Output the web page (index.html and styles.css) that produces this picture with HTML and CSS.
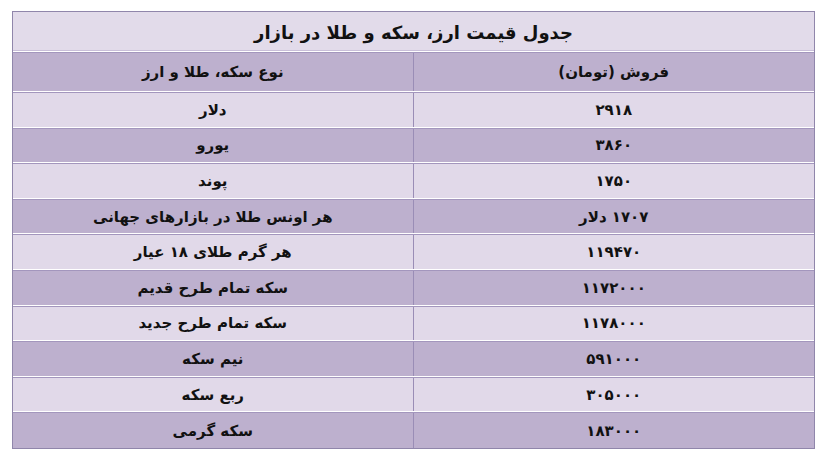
FILE: index.html
```html
<!DOCTYPE html>
<html lang="fa" dir="rtl">
<head>
<meta charset="utf-8">
<title>جدول قیمت ارز، سکه و طلا در بازار</title>
<link rel="stylesheet" href="styles.css">
</head>
<body>
<div class="page">
  <div class="board">
    <div class="title">جدول قیمت ارز، سکه و طلا در بازار</div>
    <div class="row head">
      <div class="cell">فروش (تومان)</div>
      <div class="cell">نوع سکه، طلا و ارز</div>
    </div>
    <div class="row light"><div class="cell">۲۹۱۸</div><div class="cell">دلار</div></div>
    <div class="row dark"><div class="cell">۳۸۶۰</div><div class="cell">یورو</div></div>
    <div class="row light"><div class="cell">۱۷۵۰</div><div class="cell">پوند</div></div>
    <div class="row dark"><div class="cell">۱۷۰۷ دلار</div><div class="cell">هر اونس طلا در بازارهای جهانی</div></div>
    <div class="row light"><div class="cell">۱۱۹۴۷۰</div><div class="cell">هر گرم طلای ۱۸ عیار</div></div>
    <div class="row dark"><div class="cell">۱۱۷۲۰۰۰</div><div class="cell">سکه تمام طرح قدیم</div></div>
    <div class="row light"><div class="cell">۱۱۷۸۰۰۰</div><div class="cell">سکه تمام طرح جدید</div></div>
    <div class="row dark"><div class="cell">۵۹۱۰۰۰</div><div class="cell">نیم سکه</div></div>
    <div class="row light"><div class="cell">۳۰۵۰۰۰</div><div class="cell">ربع سکه</div></div>
    <div class="row dark last"><div class="cell">۱۸۳۰۰۰</div><div class="cell">سکه گرمی</div></div>
  </div>
</div>
</body>
</html>
```
FILE: styles.css
```css
html, body {
  margin: 0;
  padding: 0;
  background: #ffffff;
}
.page {
  padding: 11px 0 0 12px;
  direction: ltr;
}
.board {
  direction: rtl;
  width: 801px;
  border: 1px solid #9086ab;
  background: #e1d9e9;
  font-family: "DejaVu Sans", "Noto Sans", sans-serif;
  font-weight: bold;
  color: #111;
}
.title {
  height: 40px;
  display: flex;
  align-items: center;
  justify-content: center;
  font-size: 18px;
  padding-top: 2px;
  box-sizing: border-box;
  background: #e2dbea;
  border-bottom: 1px solid #fff;
  box-shadow: inset 0 -1px 0 #c9bfd9;
}
.row {
  display: grid;
  grid-template-columns: 1fr 1fr;
  height: 33.6px;
  border-top: 1px solid #a396bd;
  border-bottom: 1px solid #ffffff;
}
.row.head {
  height: 38px;
  background: #bdb0ce;
}
.row.light { background: #e1d9e9; }
.row.dark { background: #bdb0ce; }
.row.last { border-bottom: 0; height: 35px; }
.cell {
  display: flex;
  align-items: center;
  justify-content: center;
  font-size: 15px;
}
.cell + .cell {
  border-right: 1px solid #9a8db6;
}
```
